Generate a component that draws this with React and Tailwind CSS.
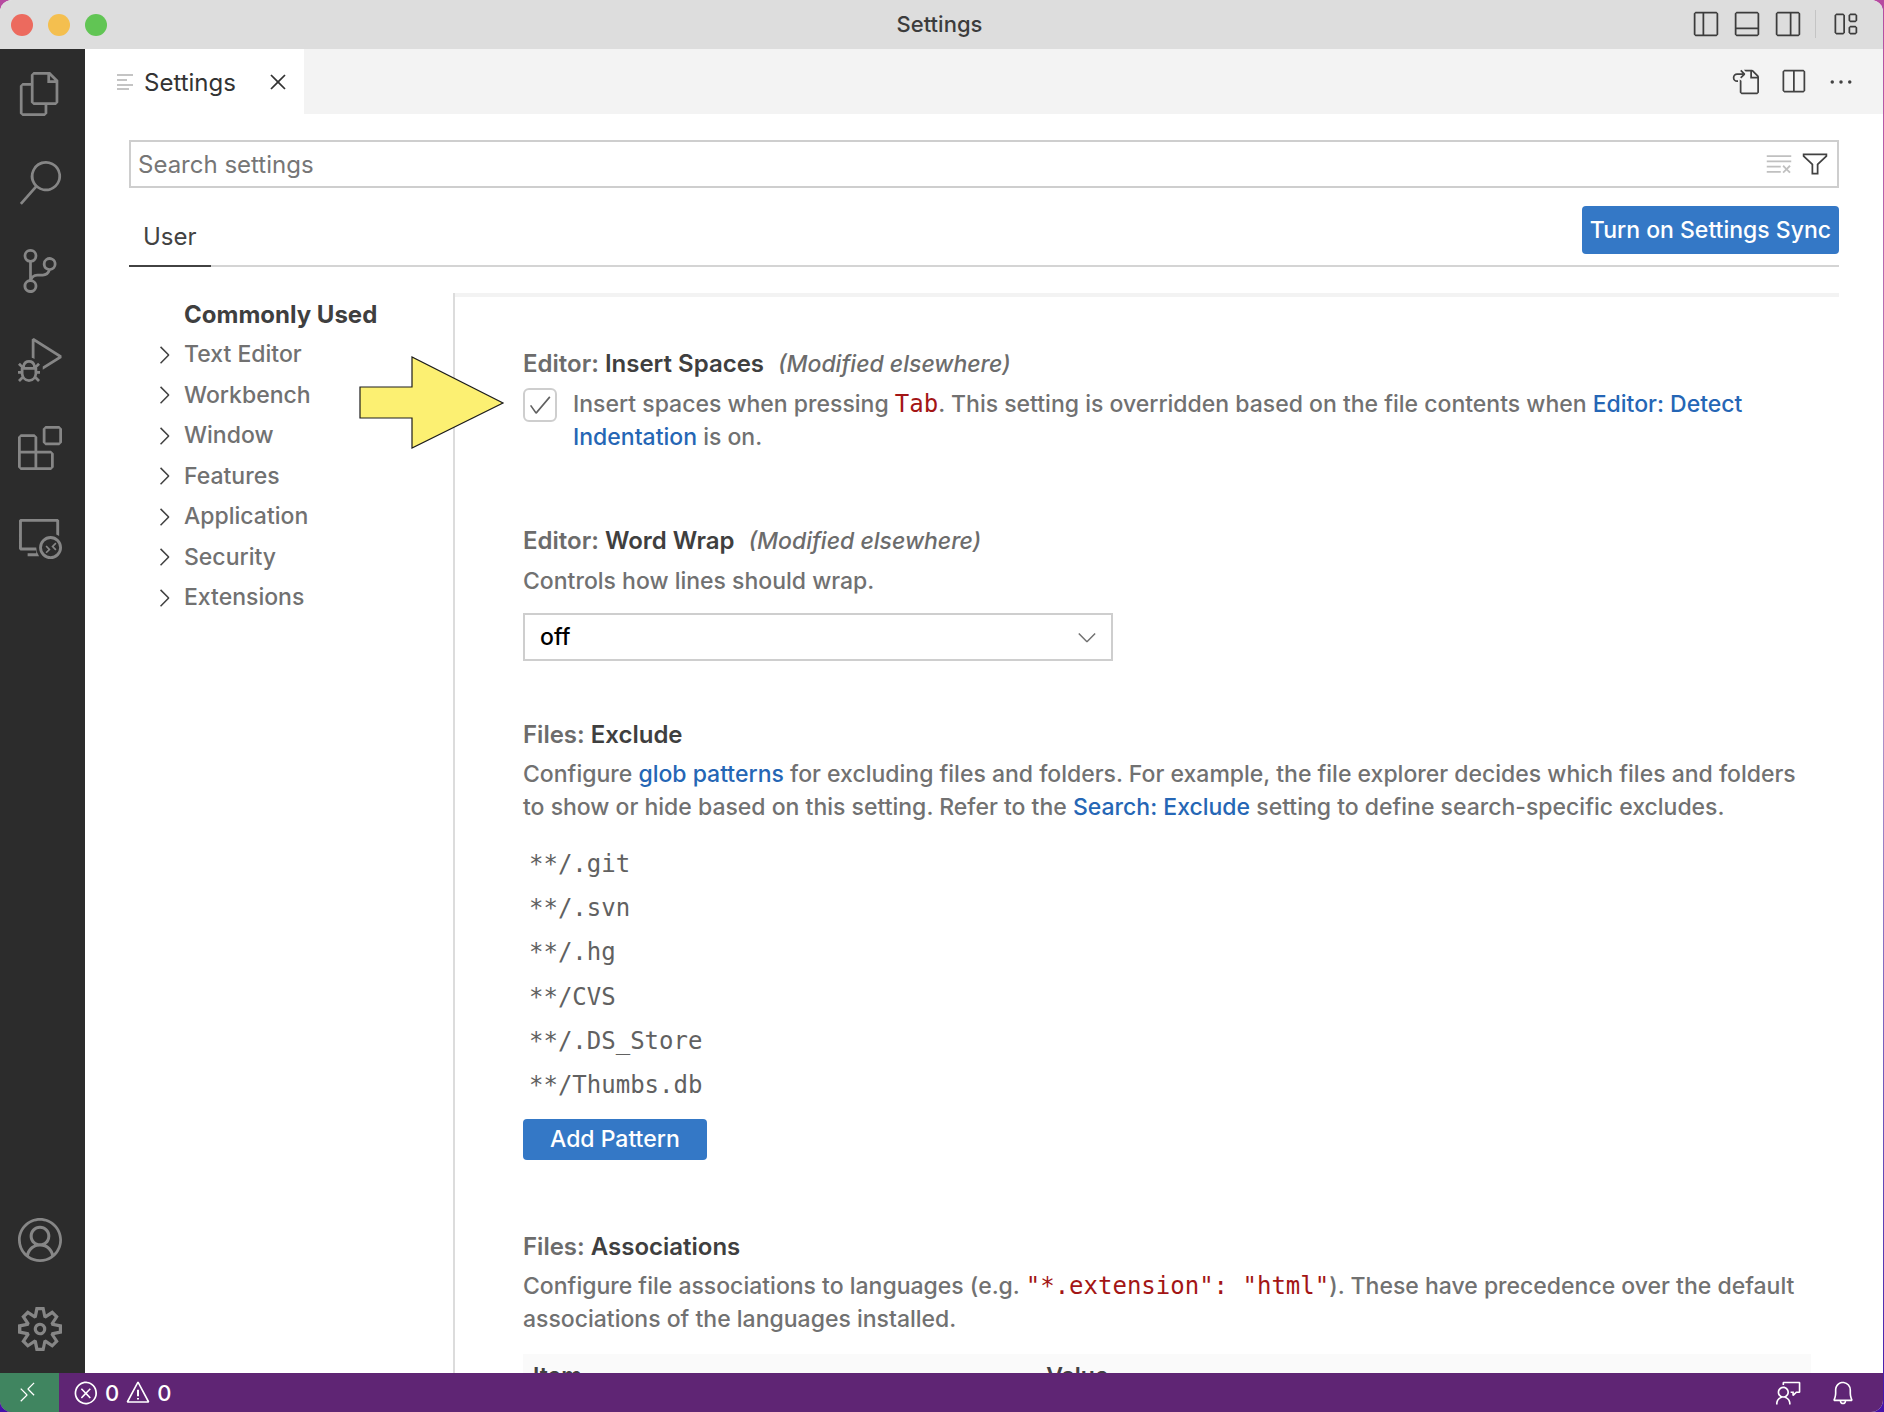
import React from "react";
import {
  VscFiles, VscSearch, VscSourceControl, VscDebugAlt, VscExtensions, VscRemoteExplorer,
  VscAccount, VscSettingsGear, VscRemote, VscError, VscWarning, VscFeedback, VscBell,
  VscLayoutSidebarLeftOff, VscLayoutPanelOff, VscLayoutSidebarRightOff, VscLayout,
  VscGoToFile, VscSplitHorizontal, VscEllipsis, VscClearAll, VscFilter, VscClose,
  VscChevronRight, VscChevronDown, VscCheck,
} from "react-icons/vsc";

const ACTIVITIES = [
  ["Explorer", VscFiles],
  ["Search", VscSearch],
  ["Source Control", VscSourceControl],
  ["Run and Debug", VscDebugAlt],
  ["Extensions", VscExtensions],
  ["Remote Explorer", VscRemoteExplorer],
];
const ACCOUNT = [
  ["Accounts", VscAccount],
  ["Manage", VscSettingsGear],
];
const SECTIONS = ["Text Editor", "Workbench", "Window", "Features", "Application", "Security", "Extensions"];
const PATTERNS = ["**/.git", "**/.svn", "**/.hg", "**/CVS", "**/.DS_Store", "**/Thumbs.db"];

function IconButton({ label, icon: Icon, className }) {
  return (
    <button type="button" aria-label={label} className={className}>
      <Icon aria-hidden="true" className="size-full" />
    </button>
  );
}

function TitleBar() {
  return (
    <header className="grid h-[49px] shrink-0 grid-cols-[1fr_auto_1fr] items-center bg-[#dddddd] text-[#3c3c3c]">
      <div className="flex gap-[15px] pl-[11px]">
        <button type="button" aria-label="Close" className="size-[22px] rounded-full bg-[#ec6a5e]" />
        <button type="button" aria-label="Minimize" className="size-[22px] rounded-full bg-[#f4bf4f]" />
        <button type="button" aria-label="Zoom" className="size-[22px] rounded-full bg-[#61c554]" />
      </div>
      <h1 className="pr-1 pb-[2px] text-[22px] leading-[28px] font-medium">Settings</h1>
      <div className="flex items-center justify-end gap-[13px] pr-6 pb-[2px]">
        <IconButton label="Toggle Primary Side Bar" icon={VscLayoutSidebarLeftOff} className="size-7" />
        <IconButton label="Toggle Panel" icon={VscLayoutPanelOff} className="size-7" />
        <IconButton label="Toggle Secondary Side Bar" icon={VscLayoutSidebarRightOff} className="size-7" />
        <div className="mr-[2px] h-7 w-px bg-[#c4c4c4]" />
        <IconButton label="Customize Layout" icon={VscLayout} className="size-7" />
      </div>
    </header>
  );
}

function ActivityBar() {
  const item = "flex w-full items-center justify-center pr-[6px]";
  return (
    <nav aria-label="Activity Bar" className="flex w-[85px] shrink-0 flex-col justify-between bg-[#2c2c2c] pt-px text-[#868686]">
      <div className="grid h-[531px] auto-rows-fr">
        {ACTIVITIES.map(([label, Icon]) => (
          <button key={label} type="button" aria-label={label} className={item}>
            <Icon aria-hidden="true" className="size-11" />
          </button>
        ))}
      </div>
      <div className="grid h-[178px] auto-rows-fr">
        {ACCOUNT.map(([label, Icon]) => (
          <button key={label} type="button" aria-label={label} className={item}>
            <Icon aria-hidden="true" className="size-11" />
          </button>
        ))}
      </div>
    </nav>
  );
}

function TabGlyph() {
  return (
    <svg viewBox="0 0 16 18" className="h-[18px] w-4" fill="none" stroke="#c4c4c4" strokeWidth="2" aria-hidden="true">
      <path d="M0 2h16M0 7h10M0 12h16M0 16h12" />
    </svg>
  );
}

function TabBar() {
  return (
    <div className="flex h-[65px] shrink-0 items-stretch justify-between bg-[#f3f3f3] text-[#424242]">
      <div className="flex items-center bg-white pr-3 pl-8 text-[#333333]">
        <TabGlyph />
        <span className="ml-[11px] pt-[2px] text-[24px]">Settings</span>
        <IconButton label="Close tab" icon={VscClose} className="ml-7 size-7" />
      </div>
      <div className="flex items-center gap-5 pr-7">
        <IconButton label="Open Settings (JSON)" icon={VscGoToFile} className="size-7" />
        <IconButton label="Split Editor" icon={VscSplitHorizontal} className="size-7" />
        <IconButton label="More Actions" icon={VscEllipsis} className="size-7" />
      </div>
    </div>
  );
}

function SettingTitle({ scope, name, modified, id }) {
  return (
    <h2 id={id} className="text-[24px] font-semibold text-[#6c6c6c]">
      {scope}: <span className="text-[#3f3f3f]">{name}</span>
      {modified && <em className="ml-[14px] text-[23px] font-medium">(Modified elsewhere)</em>}
    </h2>
  );
}

function Code({ children }) {
  return <code className="font-['DejaVu_Sans_Mono',monospace] text-[24px] leading-[24px] font-normal text-[#a31515]">{children}</code>;
}

function Link({ children }) {
  return <a href="#" className="text-[#2566b5]">{children}</a>;
}

function SettingsList() {
  return (
    <main className="min-w-0 flex-1 overflow-hidden border-l-2 border-[#dcdcdc]">
      <div className="h-1 bg-[#f3f3f3]" />
      <div className="pr-[28px] pl-[68px]">
        <section className="pt-[50px]">
          <SettingTitle scope="Editor" name="Insert Spaces" modified />
          <div className="mt-[7px] flex gap-4">
            <span className="relative size-[34px] shrink-0">
              <input id="insert-spaces" type="checkbox" defaultChecked className="peer size-full appearance-none rounded-md border-2 border-[#cecece] bg-white" />
              <VscCheck aria-hidden="true" className="pointer-events-none absolute top-1 left-1 hidden size-[26px] text-[#616161] peer-checked:block" />
            </span>
            <label htmlFor="insert-spaces">
              Insert spaces when pressing <Code>Tab</Code>. This setting is overridden based on the file contents when{" "}
              <Link>Editor: Detect Indentation</Link> is on.
            </label>
          </div>
        </section>

        <section className="pt-[70px]">
          <SettingTitle id="word-wrap-title" scope="Editor" name="Word Wrap" modified />
          <p className="mt-[7px]">Controls how lines should wrap.</p>
          <div className="relative mt-[15px] w-[590px]">
            <select aria-labelledby="word-wrap-title" defaultValue="off" className="h-12 w-full appearance-none border-2 border-[#cecece] bg-white px-[15px] text-black">
              <option>off</option>
              <option>on</option>
              <option>wordWrapColumn</option>
              <option>bounded</option>
            </select>
            <VscChevronDown aria-hidden="true" className="pointer-events-none absolute top-[10px] right-3 size-7" />
          </div>
        </section>

        <section className="pt-[57px]">
          <SettingTitle scope="Files" name="Exclude" />
          <p className="mt-[7px]">
            Configure <Link>glob patterns</Link> for excluding files and folders. For example, the file explorer decides which files and
            folders to show or hide based on this setting. Refer to the <Link>Search: Exclude</Link> setting to define search-specific
            excludes.
          </p>
          <ul className="mt-[18px] grid h-[266px] auto-rows-fr items-center px-[6px] font-['DejaVu_Sans_Mono',monospace] text-[24px] font-normal text-[#616161]">
            {PATTERNS.map((pattern) => (
              <li key={pattern}>{pattern}</li>
            ))}
          </ul>
          <button type="button" className="mt-[11px] h-[41px] rounded-sm bg-[#3478c6] px-[27px] text-white">Add Pattern</button>
        </section>

        <section className="pt-[70px]">
          <SettingTitle scope="Files" name="Associations" />
          <p className="mt-[7px]">
            Configure file associations to languages (e.g. <Code>"*.extension": "html"</Code>). These have precedence over the default
            associations of the languages installed.
          </p>
          <table className="mt-[18px] w-full table-fixed bg-[#fafafa] text-left text-[#424242]">
            <thead>
              <tr className="h-[44px]">
                <th scope="col" className="w-2/5 pl-[10px] font-semibold">Item</th>
                <th scope="col" className="pl-2 font-semibold">Value</th>
              </tr>
            </thead>
          </table>
        </section>
      </div>
    </main>
  );
}

function SettingsEditor() {
  return (
    <div className="flex min-h-0 flex-1 flex-col px-11">
      <div className="mt-[26px] flex h-12 shrink-0 items-center border-2 border-[#cecece] pr-2 pl-[7px]">
        <input type="text" aria-label="Search settings" placeholder="Search settings" className="min-w-0 flex-1 text-[24px] outline-none placeholder:text-[#767676]" />
        <IconButton label="Clear search" icon={VscClearAll} className="size-7 text-[#c0c0c0]" />
        <IconButton label="Filter settings" icon={VscFilter} className="ml-2 size-7 text-[#424242]" />
      </div>
      <div className="mt-[18px] flex h-[61px] shrink-0 items-start justify-between border-b-2 border-[#d4d4d4]">
        <button type="button" className="h-[61px] border-b-2 border-[#424242] px-[14px] pt-[2px] text-[24px] text-[#424242]">User</button>
        <button type="button" className="h-12 rounded-sm bg-[#3478c6] px-2 font-medium text-white">Turn on Settings Sync</button>
      </div>
      <div className="mt-[26px] flex min-h-0 flex-1 font-medium">
        <nav aria-label="Settings sections" className="w-[324px] shrink-0 pt-px">
          <div className="grid h-[324px] auto-rows-fr">
            <button type="button" className="pl-[55px] text-left text-[24px] font-bold text-[#3f3f3f]">Commonly Used</button>
            {SECTIONS.map((section) => (
              <button key={section} type="button" className="flex items-center pl-[21px]">
                <VscChevronRight aria-hidden="true" className="size-7 text-[#424242]" />
                <span className="ml-[6px]">{section}</span>
              </button>
            ))}
          </div>
        </nav>
        <SettingsList />
      </div>
    </div>
  );
}

function StatusBar() {
  return (
    <footer className="flex h-[39px] shrink-0 items-center bg-[#5f2574] text-[22px] font-medium text-white">
      <IconButton label="Open a Remote Window" icon={VscRemote} className="flex h-full w-[59px] items-center bg-[#408560] py-2 pr-1" />
      <button type="button" aria-label="0 errors, 0 warnings" className="ml-[14px] flex items-center gap-[6px]">
        <VscError aria-hidden="true" className="size-[26px]" />
        <span className="pt-[2px]">0</span>
        <VscWarning aria-hidden="true" className="size-[26px]" />
        <span className="pt-[2px]">0</span>
      </button>
      <div className="ml-auto flex gap-7 pr-[27px]">
        <IconButton label="Feedback" icon={VscFeedback} className="size-[26px]" />
        <IconButton label="Notifications" icon={VscBell} className="size-[26px]" />
      </div>
    </footer>
  );
}

function Arrow() {
  return (
    <svg viewBox="0 0 146 94" className="pointer-events-none absolute top-[356px] left-[359px] h-[94px] w-[146px]" aria-hidden="true">
      <path d="M1 31h52V1l91 46-91 45V62H1z" fill="#fcf072" stroke="#1c1c1c" strokeWidth="1.2" />
    </svg>
  );
}

export default function App() {
  return (
    <div className="h-screen bg-linear-to-b from-[#b64aa0] via-[#b395c8] to-[#4510aa] pr-px font-['Inter',sans-serif] text-[23px] leading-[33px] text-[#717171]">
      <div className="relative flex h-full flex-col overflow-hidden rounded-xl bg-white">
        <TitleBar />
        <div className="flex min-h-0 flex-1">
          <ActivityBar />
          <div className="flex min-w-0 flex-1 flex-col">
            <TabBar />
            <SettingsEditor />
          </div>
        </div>
        <StatusBar />
        <Arrow />
      </div>
    </div>
  );
}
